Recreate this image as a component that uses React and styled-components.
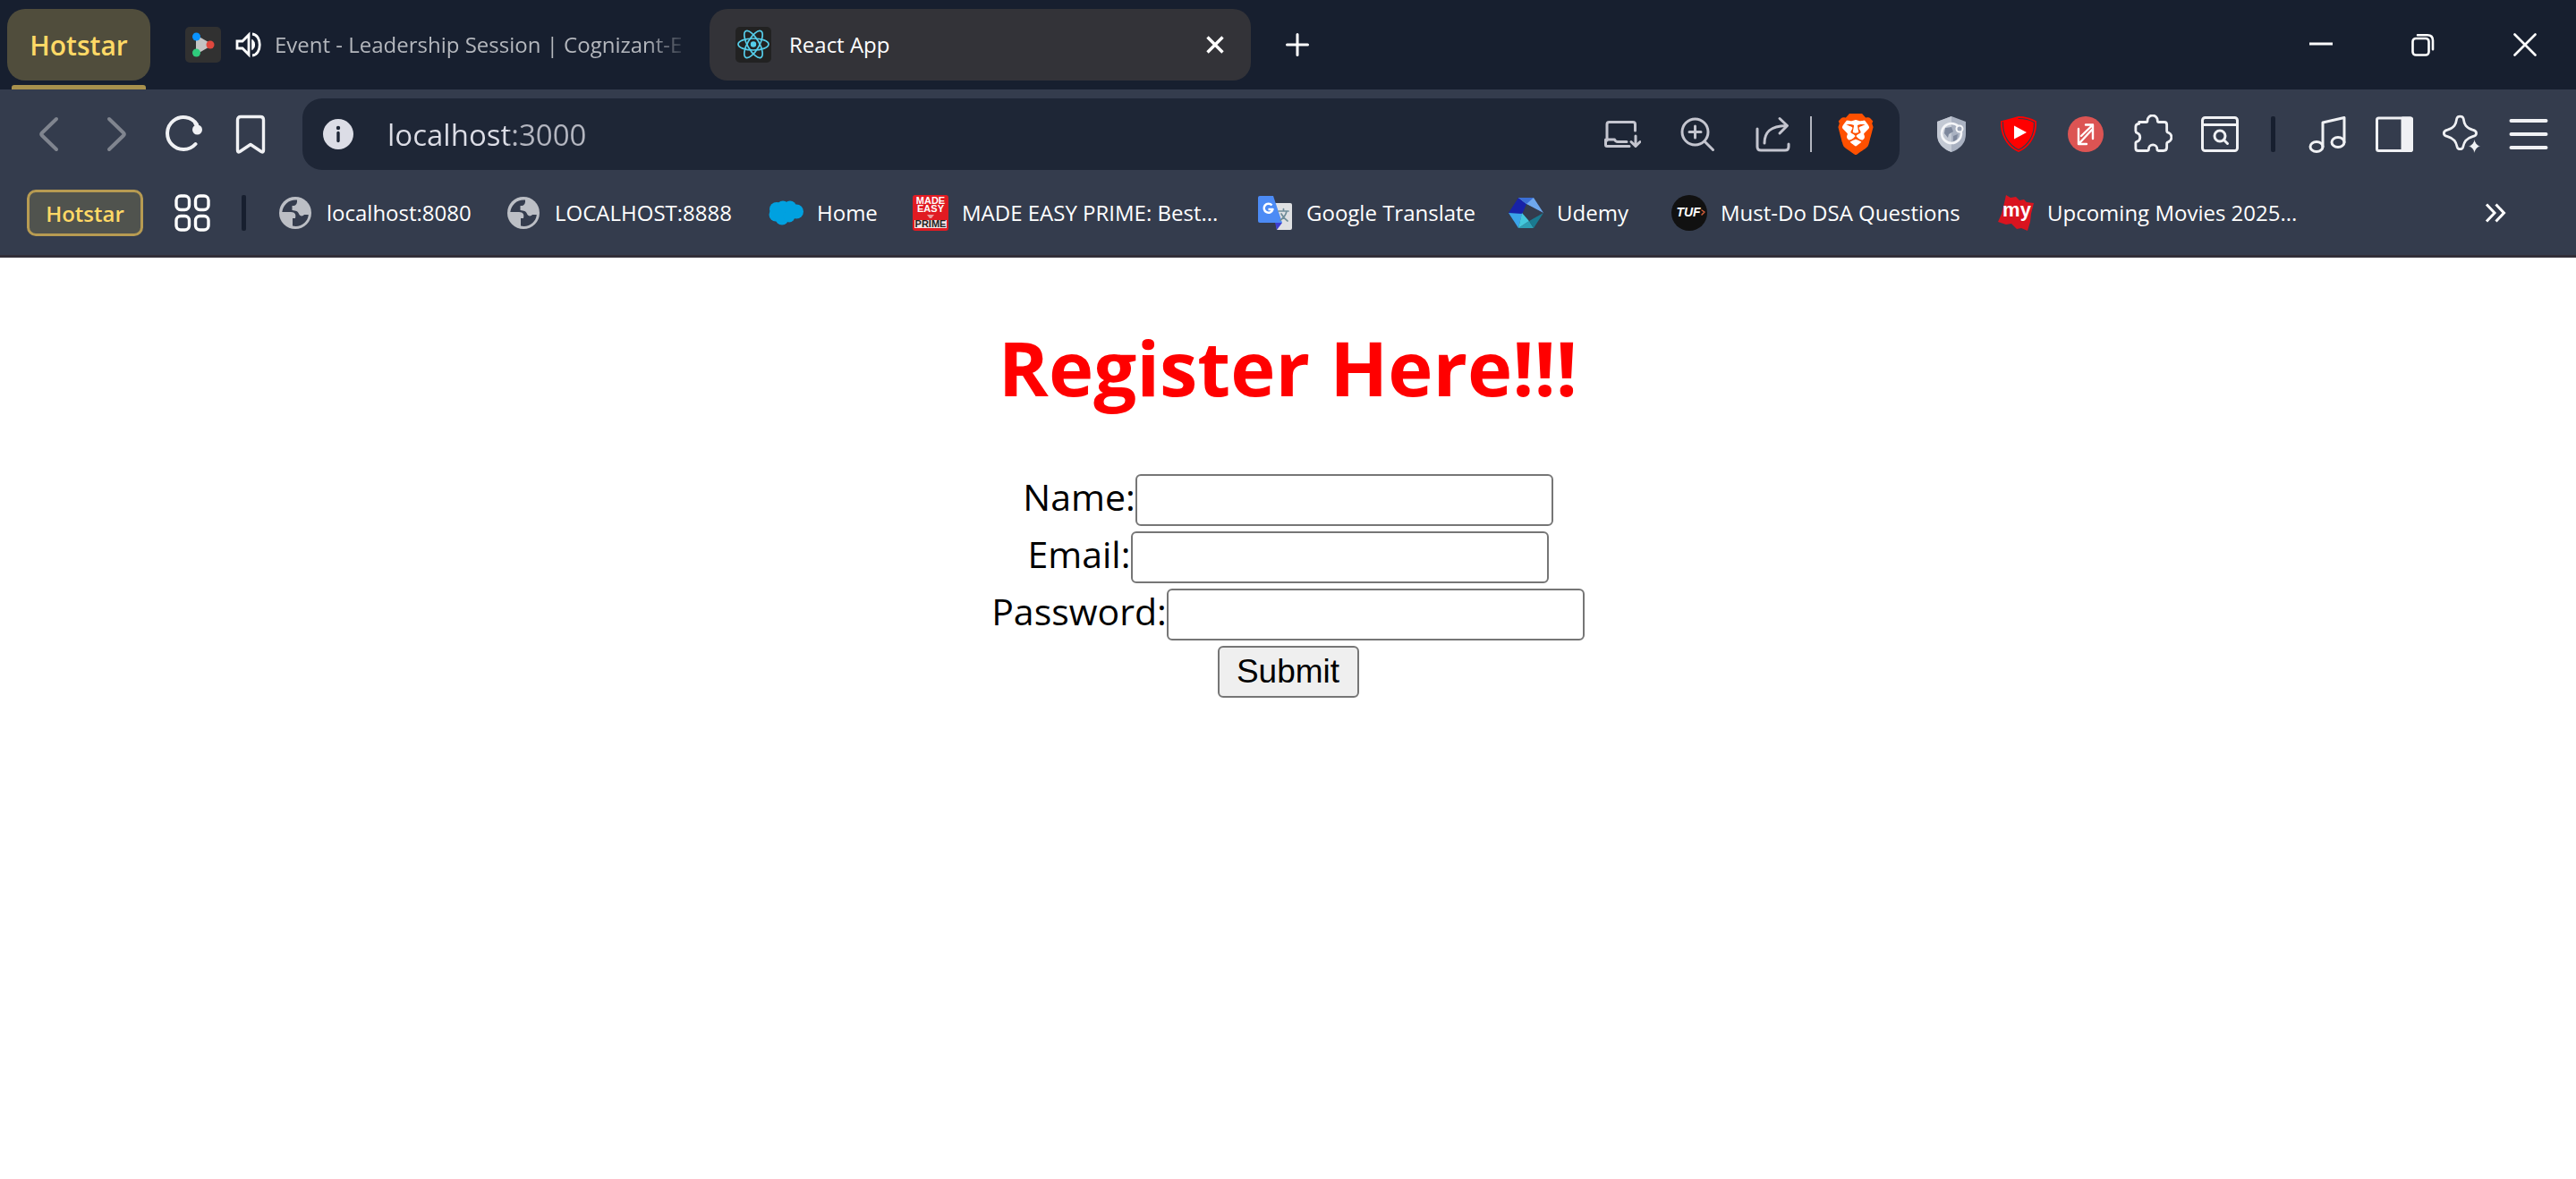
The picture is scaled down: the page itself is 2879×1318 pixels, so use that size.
import React from "react";
import styled, { createGlobalStyle } from "styled-components";
import { SiBrave } from "react-icons/si";

const GlobalStyle = createGlobalStyle`
  *, *::before, *::after { box-sizing: border-box; }
  body {
    margin: 0;
    background: #ffffff;
    color: #000000;
    font-family: "Segoe UI", "Open Sans", "Noto Sans", sans-serif;
  }
  button, input { font-family: inherit; }
  svg { display: block; flex: none; }
`;

const PlainButton = styled.button`
  display: flex;
  align-items: center;
  justify-content: center;
  padding: 0;
  border: 0;
  background: none;
  color: inherit;
`;

/* ---------- tab strip ---------- */

const TabStrip = styled.header`
  display: flex;
  align-items: stretch;
  height: 100px;
  padding-left: 8px;
  background: #171f2f;
  color: #ffffff;
`;

const TabGroup = styled.div`
  display: flex;
  flex-direction: column;
  justify-content: space-between;
  align-items: center;
  width: 160px;
  padding-top: 10px;
`;

const GroupChip = styled(PlainButton)`
  width: 160px;
  height: 80px;
  border-radius: 20px;
  background: #504d3c;
  color: #ffd966;
  font-size: 30px;
  font-weight: 600;
`;

const GroupLine = styled.div`
  width: 150px;
  height: 5px;
  border-radius: 3px 3px 0 0;
  background: #a8914d;
`;

const Tab = styled.div`
  display: flex;
  align-items: center;
  width: 605px;
  height: 80px;
  margin-top: 10px;
  padding: 0 30px 0 29px;
  border-radius: 20px;
  background: ${(p) => (p.$active ? "#333338" : "transparent")};
  color: ${(p) => (p.$active ? "#ffffff" : "#b4b7bd")};
`;

const BackgroundTab = styled(Tab)`
  width: 625px;
  padding: 0 30px 0 39px;
`;

const MuteButton = styled(PlainButton)`
  margin-left: 16px;
  color: #ffffff;
`;

const TabTitle = styled.span`
  flex: 1;
  margin-left: ${(p) => p.$gap}px;
  white-space: nowrap;
  font-size: 24px;
  line-height: 42px;
`;

const FadingTitle = styled(TabTitle)`
  mask-image: linear-gradient(to right, #000 415px, transparent 465px);
`;

const NewTab = styled(PlainButton)`
  width: 104px;
`;

const WindowControls = styled.div`
  display: flex;
  margin-left: auto;
`;

const WindowButton = styled(PlainButton)`
  width: 114px;
`;

/* ---------- address row ---------- */

const Toolbar = styled.nav`
  display: flex;
  align-items: center;
  height: 100px;
  padding-right: 16px;
  background: #343c4d;
  color: #f0f1f4;
`;

const NavButtons = styled.div`
  display: flex;
  padding: 0 21px 0 17px;
`;

const ToolButton = styled(PlainButton)`
  width: 75px;
  height: 60px;
`;

const DimToolButton = styled(ToolButton)`
  color: #80858f;
`;

const AddressBar = styled.div`
  display: flex;
  flex: 1;
  align-items: center;
  height: 80px;
  border-radius: 22px;
  background: #1e2636;
  color: #c4c5cf;
`;

const SiteInfo = styled(PlainButton)`
  width: 80px;
  height: 60px;
`;

/* The host is brighter than the port that follows it. */
const UrlInput = styled.input`
  flex: 1;
  min-width: 0;
  height: 60px;
  padding: 0 0 0 15px;
  border: 0;
  outline: 0;
  background: linear-gradient(to right, #dcdde6 150px, #b4b6c0 150px);
  background-clip: text;
  color: #dcdde6;
  -webkit-text-fill-color: transparent;
  font-size: 33px;
`;

const AddressAction = styled(PlainButton)`
  width: 84px;
  height: 60px;
`;

const AddressDivider = styled.div`
  width: 2px;
  height: 40px;
  background: #b4b6c0;
`;

const ShieldButton = styled(PlainButton)`
  width: 98px;
  height: 60px;
`;

const Extensions = styled.div`
  display: flex;
  align-items: center;
  padding-left: 20px;
`;

const BarDivider = styled.div`
  width: 5px;
  height: 40px;
  margin: 0 ${(p) => p.$space}px;
  border-radius: 2px;
  background: #171f2f;
`;

/* ---------- bookmarks ---------- */

const BookmarksBar = styled.nav`
  display: flex;
  align-items: center;
  height: 88px;
  padding: 0 78px 9px 30px;
  border-bottom: 3px solid #322f38;
  background: #343c4d;
  color: #ffffff;
`;

const SavedGroup = styled(PlainButton)`
  width: 130px;
  height: 52px;
  border: 3px solid #b79b52;
  border-radius: 10px;
  background: #50534e;
  color: #ffd966;
  font-size: 24px;
  font-weight: 600;
`;

const AppsButton = styled(PlainButton)`
  margin: 0 35px;
`;

const BookmarkList = styled.div`
  display: flex;
  flex: 1;
  margin-left: 35px;
`;

const Bookmark = styled.a`
  display: flex;
  flex: none;
  align-items: center;
  gap: 15px;
  width: ${(p) => p.$width}px;
  color: inherit;
  font-size: 24px;
  line-height: 42px;
  text-decoration: none;
  white-space: nowrap;
`;

/* ---------- page ---------- */

const Page = styled.main`
  text-align: center;
  font-size: 41px;
`;

const Title = styled.h1`
  margin: 0;
  padding: 62px 0 57px;
  color: #ff0000;
  font-size: 85px;
  font-weight: 700;
  line-height: 120px;
`;

const Field = styled.div`
  display: flex;
  align-items: baseline;
  justify-content: center;
  height: 64px;
  line-height: 56px;
`;

const TextInput = styled.input`
  width: 467px;
  height: 58px;
  padding: 3px 5px;
  border: 2px solid #767676;
  border-radius: 6px;
  background: #ffffff;
  font-family: Arial, "Liberation Sans", sans-serif;
  font-size: 37px;
`;

const SubmitButton = styled.button`
  width: 158px;
  height: 58px;
  padding: 0;
  border: 2px solid #767676;
  border-radius: 6px;
  background: #efefef;
  color: #000000;
  font-family: Arial, "Liberation Sans", sans-serif;
  font-size: 37px;
  line-height: 50px;
`;

/* ---------- drawings ---------- */

function Svg({ w = 40, h = 40, sw = 3, children, ...rest }) {
  return (
    <svg
      width={w}
      height={h}
      viewBox={`0 0 ${w} ${h}`}
      fill="none"
      stroke="currentColor"
      strokeWidth={sw}
      strokeLinecap="round"
      strokeLinejoin="round"
      aria-hidden="true"
      {...rest}
    >
      {children}
    </svg>
  );
}

const EventLogo = () => (
  <Svg stroke="none">
    <rect width="40" height="40" rx="5" fill="#313131" />
    <path d="M12 9 31 20 12 31Z" fill="#c4c4c4" />
    <circle cx="12.500" cy="11" r="4.500" fill="#0a93ff" />
    <circle cx="28" cy="20" r="4.500" fill="#e0483e" />
    <circle cx="12.500" cy="29" r="4.500" fill="#2fcb7c" />
  </Svg>
);

const Speaker = () => (
  <Svg w={30} h={30} sw={2.8}>
    <path d="M2 11h6l7-7v22l-7-7H2z" strokeLinejoin="miter" />
    <path d="M19 9.500c3.500 2 3.500 9 0 11z" fill="currentColor" strokeWidth="1" />
    <path d="M19 3c11 1 11 23 0 24" strokeLinecap="butt" />
  </Svg>
);

const ReactLogo = () => (
  <Svg sw={1.7} stroke="#55cdea">
    <rect width="40" height="40" rx="5" fill="#222222" stroke="none" />
    <ellipse cx="20" cy="19.500" rx="17" ry="6.500" />
    <ellipse cx="20" cy="19.500" rx="17" ry="6.500" transform="rotate(60 20 19.500)" />
    <ellipse cx="20" cy="19.500" rx="17" ry="6.500" transform="rotate(120 20 19.500)" />
    <circle cx="20" cy="19.500" r="3.200" fill="#55cdea" stroke="none" />
  </Svg>
);

const Globe = () => (
  <Svg stroke="none">
    <circle cx="20" cy="20" r="18" fill="#bcbfc5" />
    <path
      d="M22 5.500 C14 4.500 6.500 10 5.300 19 L15 19 C20 19 21 22 20 26 L17 26 L17 34.500 C26 36.500 34 30.500 34.800 22 L30 22 C28.500 24 25 24 24 21 C23 18 20.500 17.500 16.500 17 L16.500 12 C19.500 12.500 22.500 11 22 5.500Z"
      fill="#343c4d"
    />
  </Svg>
);

const SalesforceCloud = () => (
  <Svg stroke="none" fill="#00a1e0">
    <circle cx="10" cy="16" r="8" />
    <circle cx="17" cy="13.500" r="7" />
    <circle cx="25" cy="13.500" r="7" />
    <circle cx="32" cy="18.500" r="8" />
    <circle cx="9" cy="22" r="7.500" />
    <circle cx="16" cy="26" r="7.500" />
    <circle cx="24" cy="24" r="6.500" />
  </Svg>
);

const TinyLogoText = styled.text`
  fill: ${(p) => p.$color || "#ffffff"};
  stroke: none;
  font-family: "Liberation Sans", Arial, sans-serif;
  font-size: ${(p) => p.$size}px;
  font-style: ${(p) => (p.$italic ? "italic" : "normal")};
  font-weight: 700;
  text-anchor: middle;
`;

const MadeEasyLogo = () => (
  <Svg stroke="none">
    <rect width="40" height="40" rx="3" fill="#e11b22" />
    <TinyLogoText x="20" y="10" $size={11}>MADE</TinyLogoText>
    <TinyLogoText x="20" y="19" $size={11}>EASY</TinyLogoText>
    <path d="M16 22h8l-3 4h-2z" fill="#e99a9c" />
    <rect x="2" y="28" width="36" height="9" fill="#f4e4e4" />
    <TinyLogoText x="20" y="36" $size={11} $color="#222222">PRIME</TinyLogoText>
  </Svg>
);

const TranslateLogo = () => (
  <Svg stroke="none">
    <path d="M19 9h18q2 0 2 2v26q0 2-2 2H22z" fill="#dfe1e3" />
    <path d="M20 31h8l-6 8z" fill="#3f3fd0" />
    <path d="M3 1h15l10 30H3q-2 0-2-2V3q0-2 2-2z" fill="#4c8bf5" />
    <path d="M16.500 11.500a5 5 0 1 0 1 4.500h-5" stroke="#ffffff" strokeWidth="2.500" strokeLinecap="butt" />
    <path d="M24 18h11M29.500 15.500v2.500M33 18c-1 5-4 8-7 10M27 21c2 4 4 6 7 8" stroke="#6f8d99" strokeWidth="1.700" />
  </Svg>
);

const UdemyLogo = () => (
  <Svg stroke="none">
    <path d="M12 3 1 20l15 2 5-12z" fill="#1722a8" />
    <path d="M12 3h17l11 17-19-10z" fill="#6ea8ee" />
    <path d="M12 3h17l-8 7z" fill="#3b6fd6" />
    <path d="M1 20 12 37l4-16z" fill="#3aa4ea" />
    <path d="M12 37h17l-5-8z" fill="#2d9fb4" />
    <path d="M29 37l11-17-16 9z" fill="#1a7a90" />
    <path d="M12 37 16 20l8 9z" fill="#43c8dc" />
    <path d="M22 11 37 19 24 29 17 20z" fill="#343c4d" />
  </Svg>
);

const TufLogo = () => (
  <Svg stroke="none">
    <circle cx="20" cy="20" r="20" fill="#111111" />
    <TinyLogoText x="19" y="24" $size={14} $italic>TUF</TinyLogoText>
    <path d="m34 17 3 2-3 3" stroke="#d8603a" strokeWidth="1.500" />
  </Svg>
);

const MyLogo = () => (
  <Svg stroke="none">
    <path d="M9 0l5 3 6-1 4 4 5-1 3 3 8 1-3 12-1 9-3 10-7-3-5 1-6-6-6 1-9-3 4-9 3-12z" fill="#d9141f" />
    <TinyLogoText x="21" y="24" $size={22}>my</TinyLogoText>
  </Svg>
);

const BraveMark = styled.span`
  display: grid;
  place-items: center;
  color: #ff5000;
  > * { grid-area: 1 / 1; }
`;

const BraveLogo = () => (
  <BraveMark>
    <Svg w={46} h={46} stroke="none">
      <path d="M11 7h24l5 8-4 17-13 9-13-9-4-17z" fill="#ffffff" />
    </Svg>
    <SiBrave size={46} />
  </BraveMark>
);

/* ---------- content ---------- */

const bookmarks = [
  { label: "localhost:8080", Icon: Globe, width: 255 },
  { label: "LOCALHOST:8888", Icon: Globe, width: 293 },
  { label: "Home", Icon: SalesforceCloud, width: 162 },
  { label: "MADE EASY PRIME: Best...", Icon: MadeEasyLogo, width: 385 },
  { label: "Google Translate", Icon: TranslateLogo, width: 280 },
  { label: "Udemy", Icon: UdemyLogo, width: 183 },
  { label: "Must-Do DSA Questions", Icon: TufLogo, width: 365 },
  { label: "Upcoming Movies 2025...", Icon: MyLogo, width: 340 },
];

const fields = [
  { id: "name", label: "Name:", type: "text" },
  { id: "email", label: "Email:", type: "email" },
  { id: "password", label: "Password:", type: "password" },
];

function Tabs() {
  return (
    <TabStrip>
      <TabGroup>
        <GroupChip>Hotstar</GroupChip>
        <GroupLine />
      </TabGroup>
      <BackgroundTab>
        <EventLogo />
        <MuteButton aria-label="Mute tab">
          <Speaker />
        </MuteButton>
        <FadingTitle $gap={14}>Event - Leadership Session | Cognizant-E</FadingTitle>
      </BackgroundTab>
      <Tab $active>
        <ReactLogo />
        <TabTitle $gap={20}>React App</TabTitle>
        <PlainButton aria-label="Close tab">
          <Svg w={20} h={20} sw={3.4} strokeLinecap="butt">
            <path d="M1.500 1.500l17 17M18.500 1.500l-17 17" />
          </Svg>
        </PlainButton>
      </Tab>
      <NewTab aria-label="New tab">
        <Svg w={26} h={26}>
          <path d="M13 1.500v23M1.500 13h23" />
        </Svg>
      </NewTab>
      <WindowControls>
        <WindowButton aria-label="Minimize">
          <Svg w={26} h={26} sw={3} strokeLinecap="butt">
            <path d="M0 12h26" />
          </Svg>
        </WindowButton>
        <WindowButton aria-label="Restore">
          <Svg w={26} h={26} sw={2.6}>
            <rect x="1.500" y="6" width="18" height="18.500" rx="3.500" />
            <path d="M7 2.200h11q6 0 6 6v10" />
          </Svg>
        </WindowButton>
        <WindowButton aria-label="Close window">
          <Svg w={26} h={26} sw={2.6}>
            <path d="M1.500 1.500l23 23M24.500 1.500l-23 23" />
          </Svg>
        </WindowButton>
      </WindowControls>
    </TabStrip>
  );
}

function AddressRow() {
  return (
    <Toolbar>
      <NavButtons>
        <DimToolButton aria-label="Back">
          <Svg sw={4}>
            <path d="M28 3 12 18.500q-1.500 1.500 0 3L28 37" />
          </Svg>
        </DimToolButton>
        <DimToolButton aria-label="Forward">
          <Svg sw={4}>
            <path d="M12 3l16 15.500q1.500 1.500 0 3L12 37" />
          </Svg>
        </DimToolButton>
        <ToolButton aria-label="Reload">
          <Svg w={44} h={44} sw={4}>
            <path d="M35.500 33A18 18 0 1 1 37 11" />
            <circle cx="37.500" cy="17" r="5.500" fill="currentColor" stroke="none" />
            <path d="M35 9.500l3 5" />
          </Svg>
        </ToolButton>
        <ToolButton aria-label="Bookmark this page">
          <Svg w={44} h={44} sw={3.4}>
            <path d="M11 2.500h22q3.500 0 3.500 3.500v34q0 3-2.500 1.500L22 33.500 10 41.500q-2.500 1.500-2.500-1.500V6q0-3.500 3.500-3.500z" />
          </Svg>
        </ToolButton>
      </NavButtons>

      <AddressBar>
        <SiteInfo aria-label="Site information">
          <Svg w={34} h={34} stroke="none">
            <circle cx="17" cy="17" r="17" fill="#dcdde6" />
            <path d="M17 15.500v9" stroke="#1e2636" strokeWidth="3.400" />
            <circle cx="17" cy="10" r="2.200" fill="#1e2636" />
          </Svg>
        </SiteInfo>
        <UrlInput aria-label="Address" defaultValue="localhost:3000" />
        <AddressAction aria-label="Install app">
          <Svg w={42} h={32}>
            <path d="M4 23V5q0-2.500 2.500-2.500H33q2.500 0 2.500 2.500v7M2.500 22h10q1 2.500 3.500 2.500h10M2.500 22v6q0 1.500 1.500 1.500h25" />
            <path d="M36 18v11M31 24.500l5 5 5-5" />
          </Svg>
        </AddressAction>
        <AddressAction aria-label="Zoom">
          <Svg>
            <circle cx="17.500" cy="17.500" r="14.500" />
            <path d="M28 28l9.500 9.500M17.500 11v13M11 17.500h13" />
          </Svg>
        </AddressAction>
        <AddressAction aria-label="Share">
          <Svg>
            <path d="M3 14v20q0 4 4 4h27q4 0 4-4v-3" />
            <path d="M11 30C11 18 17 11 35 10.500M28 2.500l8.500 8-8.500 8.500" />
          </Svg>
        </AddressAction>
        <AddressDivider />
        <ShieldButton aria-label="Brave Shields">
          <BraveLogo />
        </ShieldButton>
      </AddressBar>

      <Extensions>
        <ToolButton aria-label="Privacy extension">
          <Svg stroke="none">
            <path d="M20 0 36 6v14q0 14-16 20Q4 34 4 20V6z" fill="#a9b1c1" />
            <path d="M20 0v40Q4 34 4 20V6z" fill="#c3c9d4" />
            <path d="M13 13l7-1 2 5-5 3-1 4-4-5zM22 22l5-2-1 6-4 2z" fill="#7d879c" />
            <circle cx="20" cy="19" r="11" stroke="#f4f5f8" strokeWidth="2.600" />
            <circle cx="29" cy="14" r="3.500" fill="#9aa3b5" stroke="#f4f5f8" strokeWidth="2" />
          </Svg>
        </ToolButton>
        <ToolButton aria-label="Video blocker">
          <Svg>
            <path d="M20 0Q31 0 40 5.500C41 22 32 35 20 40 8 35-1 22 0 5.500 9 0 20 0z" stroke="none" fill="#ff0000" />
            <path d="M20 2.500Q30 2.500 37.500 6.700C38 22 30 33 20 37.500 10 33 2 22 2.500 6.700 10 2.500 20 2.500z" stroke="#343c4d" strokeWidth="1.200" />
            <path d="M15 10.500v15l14-7.500z" fill="#ffffff" stroke="none" />
          </Svg>
        </ToolButton>
        <ToolButton aria-label="Redirect extension">
          <Svg sw={2.4} stroke="#ffffff">
            <circle cx="20" cy="20" r="20" fill="#dc5453" stroke="none" />
            <path d="M12 14v17h9M12.500 30.500 27 15M28 25V9.500h-8M15 22 28 9.500" />
          </Svg>
        </ToolButton>
        <ToolButton aria-label="Extensions">
          <Svg w={44} h={44}>
            <path d="M6 8h8.500q1.500 0 1.500-2a6 6 0 0 1 12 0q0 2 1.500 2H36q3 0 3 3v7q0 2 2 2.500a6 6 0 0 1 0 11q-2 .5-2 2.500v4q0 4-4 4h-6q-1.500 0-1.500-2a5 5 0 0 0-10 0q0 2-1.500 2H5q-3 0-3-3v-6q0-1.500 2-2a5.500 5.500 0 0 0 0-10q-2-1-2-2.500v-5q0-3.500 4-3.500z" transform="translate(1 1) scale(.94)" />
          </Svg>
        </ToolButton>
        <ToolButton aria-label="Search tabs">
          <Svg w={44} h={44}>
            <rect x="2.500" y="3.500" width="39" height="37" rx="3" />
            <path d="M3 11.500h38" />
            <circle cx="22" cy="24" r="6" />
            <path d="M26.500 28.500l4 4" />
          </Svg>
        </ToolButton>
        <BarDivider $space={20} />
        <ToolButton aria-label="Media">
          <Svg w={44} h={44}>
            <ellipse cx="10" cy="36" rx="7" ry="5.500" />
            <ellipse cx="34" cy="31" rx="7" ry="5.500" />
            <path d="M17 36V9L41 3.500V31" />
          </Svg>
        </ToolButton>
        <ToolButton aria-label="Side panel">
          <Svg w={44} h={44}>
            <rect x="2.500" y="4" width="39" height="36.500" rx="2" />
            <path d="M31 4h9q1.500 0 1.500 1.500v33q0 2-1.500 2h-9z" fill="currentColor" />
          </Svg>
        </ToolButton>
        <ToolButton aria-label="Assistant">
          <Svg w={44} h={44}>
            <path d="M18 5C19 1.500 25 1.500 26 5C27 12 29 16 37 18.500C43 20 43 25 37 26.500C29 29 27 33 25.500 39C24.500 42.500 19.500 42.500 18.500 39C17 33 15 29 7 26.500C1 25 1 20 7 18.500C15 16 17 12 18 5Z" transform="scale(.93)" />
            <path d="M36.500 27q1.500 8 8 8.500-6.500.5-8 8.500-1.500-8-8-8.500 6.500-.5 8-8.500z" fill="currentColor" stroke="#343c4d" strokeWidth="1" />
          </Svg>
        </ToolButton>
        <ToolButton aria-label="Menu">
          <Svg w={44} h={44} sw={4}>
            <path d="M2.500 7h39M2.500 22h39M2.500 37h39" />
          </Svg>
        </ToolButton>
      </Extensions>
    </Toolbar>
  );
}

function Bookmarks() {
  return (
    <BookmarksBar>
      <SavedGroup>Hotstar</SavedGroup>
      <AppsButton aria-label="All bookmark groups">
        <Svg w={40} h={42} sw={3.4}>
          <rect x="2" y="2" width="14.500" height="15.500" rx="5" />
          <rect x="23.500" y="2" width="14.500" height="15.500" rx="5" />
          <rect x="2" y="24.500" width="14.500" height="15.500" rx="5" />
          <rect x="23.500" y="24.500" width="14.500" height="15.500" rx="5" />
        </Svg>
      </AppsButton>
      <BarDivider $space={0} />
      <BookmarkList>
        {bookmarks.map(({ label, Icon, width }) => (
          <Bookmark key={label} href="#" $width={width}>
            <Icon />
            {label}
          </Bookmark>
        ))}
      </BookmarkList>
      <PlainButton aria-label="More bookmarks">
        <Svg w={24} h={22} strokeLinecap="butt" strokeLinejoin="miter">
          <path d="M2 1.500l9 9.500-9 9.500M12.500 1.500l9 9.500-9 9.500" />
        </Svg>
      </PlainButton>
    </BookmarksBar>
  );
}

export default function App() {
  return (
    <>
      <GlobalStyle />
      <Tabs />
      <AddressRow />
      <Bookmarks />
      <Page>
        <Title>Register Here!!!</Title>
        <form onSubmit={(event) => event.preventDefault()}>
          {fields.map(({ id, label, type }) => (
            <Field key={id}>
              <label htmlFor={id}>{label}</label>
              <TextInput id={id} name={id} type={type} />
            </Field>
          ))}
          <SubmitButton type="submit">Submit</SubmitButton>
        </form>
      </Page>
    </>
  );
}
